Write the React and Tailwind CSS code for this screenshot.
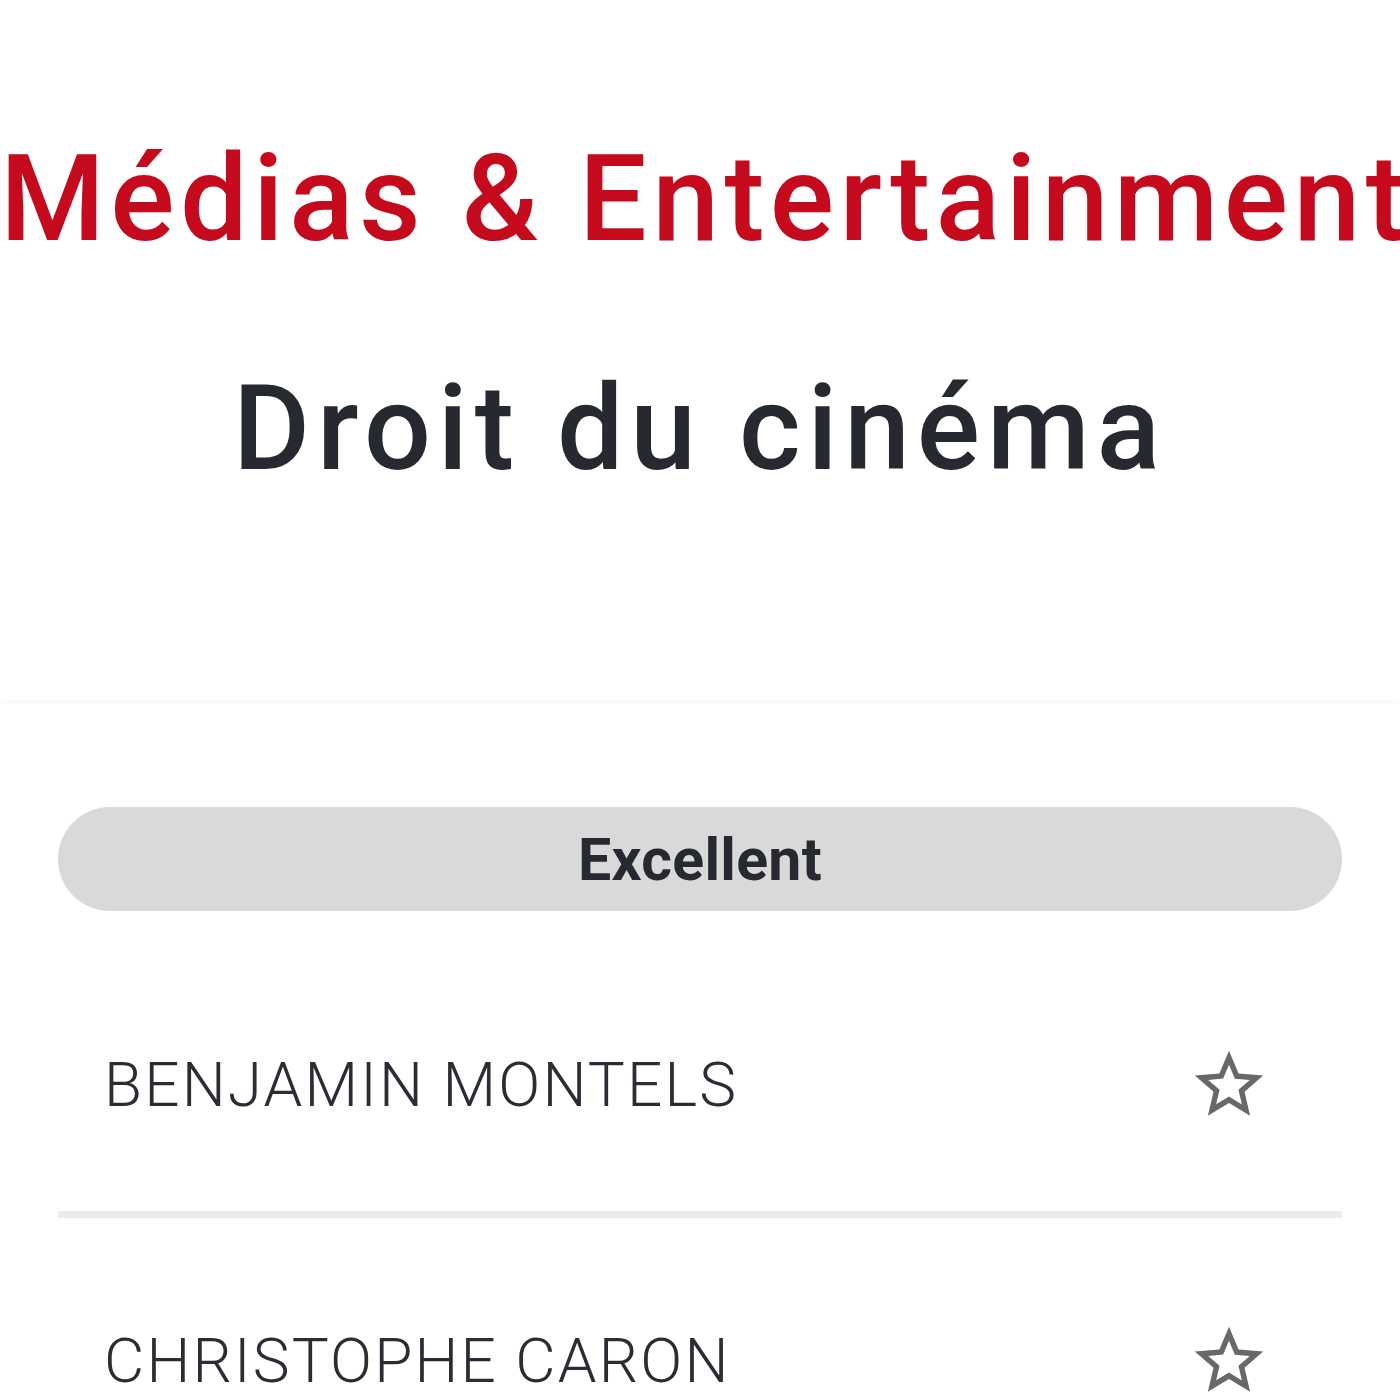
import React from "react";

function Star() {
  return (
    <svg width="82" height="82" viewBox="0 0 24 24" fill="#686868">
      <path d="M22 9.24l-7.19-.62L12 2 9.19 8.63 2 9.24l5.46 4.73L5.82 21 12 17.27 18.18 21l-1.63-7.03L22 9.24zM12 15.4l-3.76 2.27 1-4.28-3.32-2.88 4.38-.38L12 6.1l1.71 4.04 4.38.38-3.32 2.88 1 4.28L12 15.4z" />
    </svg>
  );
}

function Row({ name, h }) {
  return (
    <div className={"flex items-center justify-between pl-[46px] pr-[72px] " + h}>
      <span className="text-[62px] leading-none font-light tracking-[0.035em] text-[#2a2d33]">{name}</span>
      <Star />
    </div>
  );
}

export default function App() {
  return (
    <div className="w-[1400px] h-[1400px] overflow-hidden bg-white" style={{ fontFamily: "Roboto, 'Liberation Sans', sans-serif" }}>
      <div className="pt-[139px] text-center">
        <h1 className="text-[120px] leading-none font-medium text-[#c40a1c] whitespace-nowrap tracking-[0.045em]">Médias &amp; Entertainment</h1>
        <h2 className="mt-[111px] text-[118px] leading-none font-medium text-[#262930] whitespace-nowrap tracking-[0.058em]">Droit du cinéma</h2>
      </div>
      <div className="mt-[215px] shadow-[0_-2px_6px_rgba(0,0,0,0.035)] pt-[104px] px-[58px]">
        <div className="h-[104px] rounded-full bg-[#d9d9d9] flex items-center justify-center">
          <span className="text-[59px] leading-none font-bold text-[#262930] tracking-[0.005em]">Excellent</span>
        </div>
        <div className="mt-[48px]">
          <Row name="BENJAMIN MONTELS" h="h-[252px]" />
          <div className="h-[7px] bg-[#ebebeb]" />
          <Row name="CHRISTOPHE CARON" h="h-[286px]" />
        </div>
      </div>
    </div>
  );
}
